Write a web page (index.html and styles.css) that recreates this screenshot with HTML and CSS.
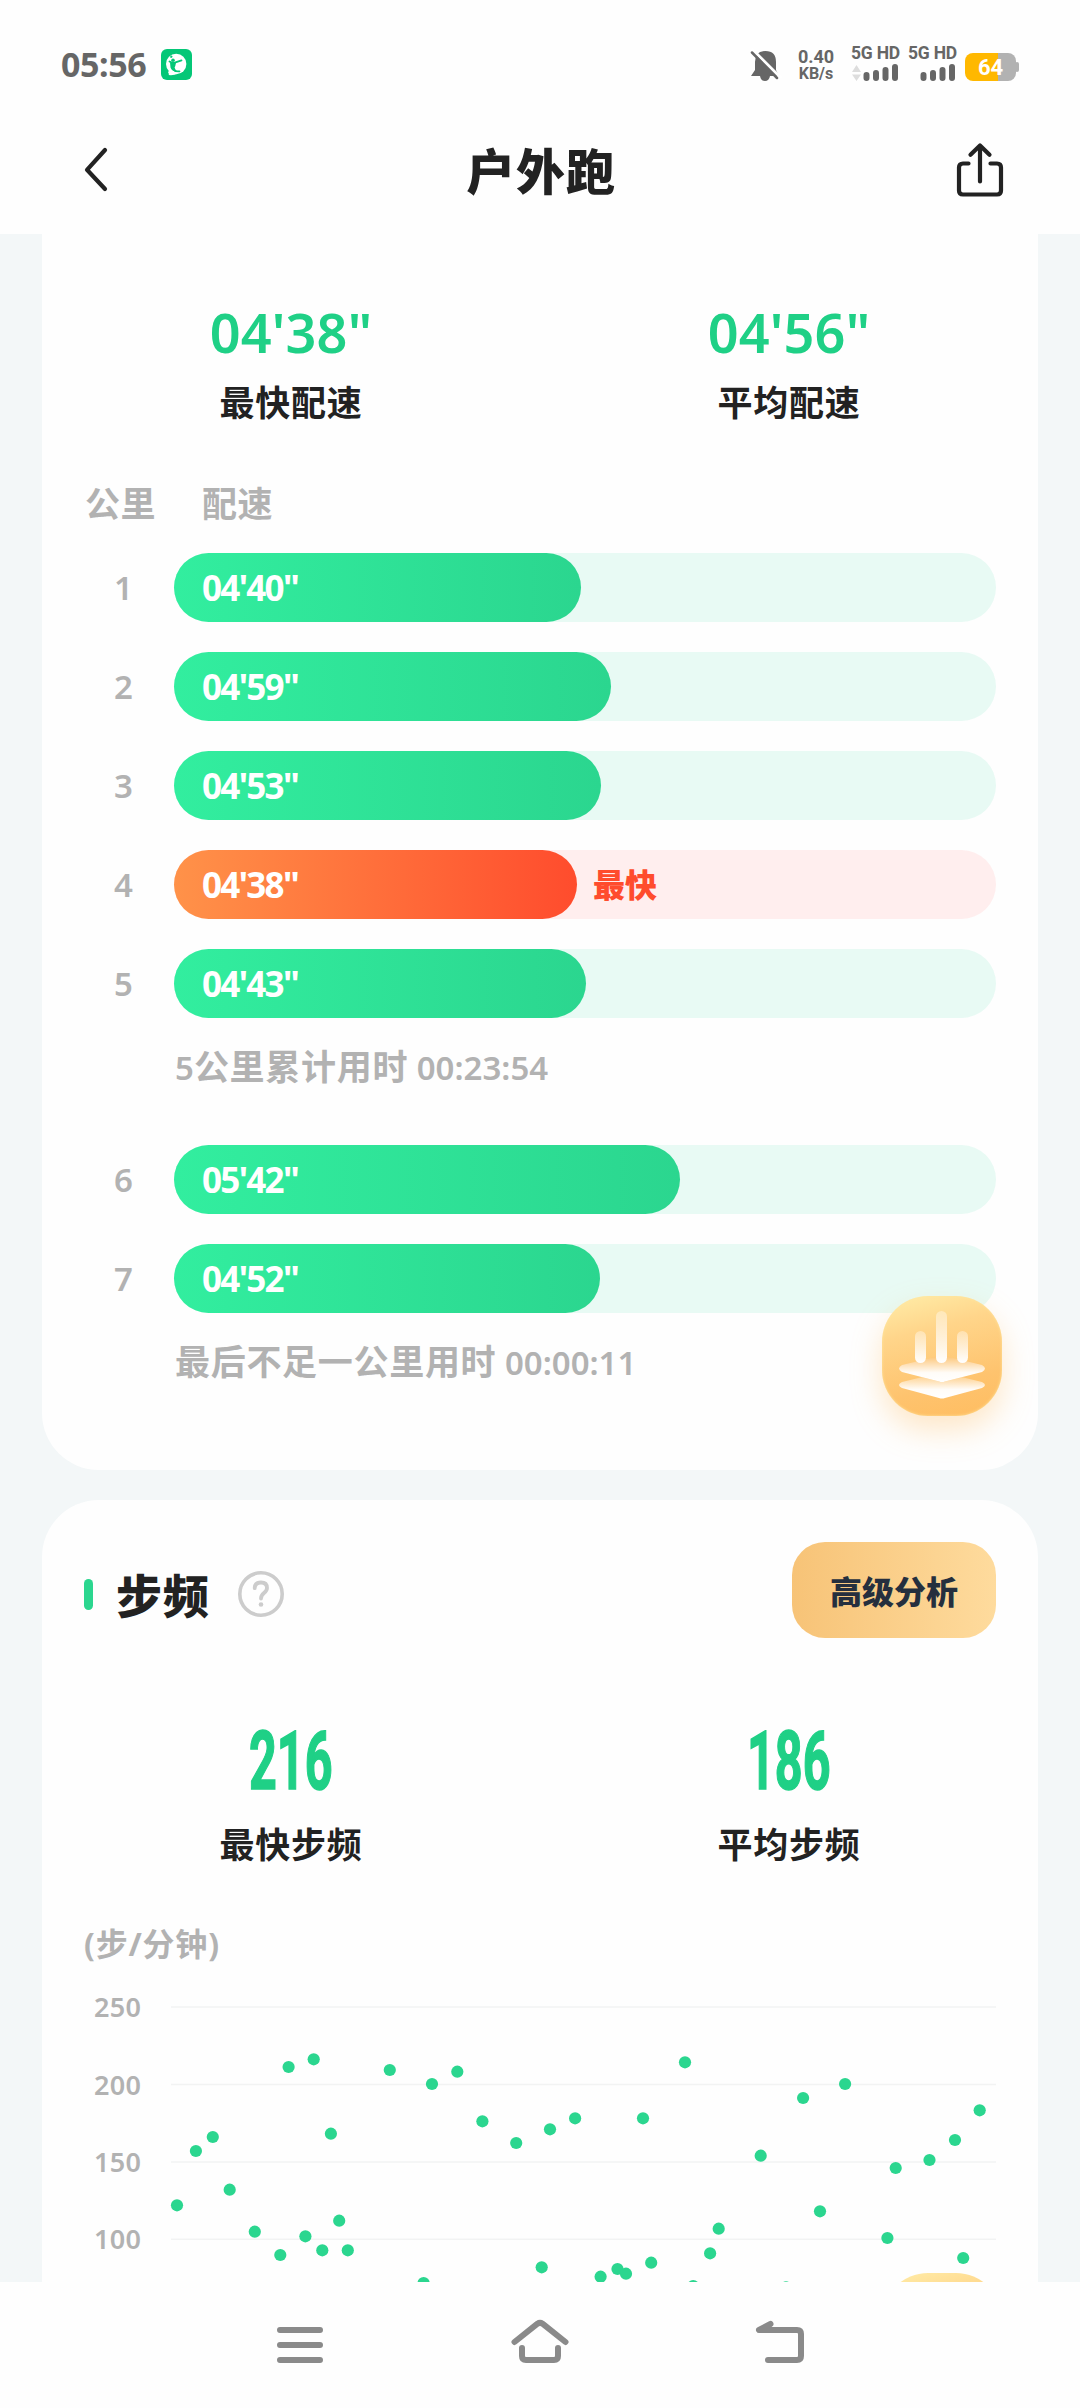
FILE: index.html
```html
<!DOCTYPE html>
<html lang="zh-CN">
<head>
<meta charset="utf-8">
<title>户外跑</title>
<link rel="stylesheet" href="styles.css">
</head>
<body>
<header class="top">
  <div class="status">
    <span class="clock">05:56</span>
    <svg class="app-icon" width="31" height="31" viewBox="0 0 31 31">
      <rect width="31" height="31" rx="6" fill="#04c777"/>
      <circle cx="15.200" cy="15" r="10.200" fill="#fff"/>
      <path d="M7 23Q8.500 25.800 7.500 26Q13 26.600 17 24.500L9 21Z" fill="#fff"/>
      <circle cx="12" cy="11.200" r="1.800" fill="#04c777"/>
      <path d="M10 8L10.600 7.500M8.500 12.500Q11.500 14.500 14.500 13.400L20.500 11.400M13.500 14.500Q9 18.500 14.500 22.200L18.500 22.300" stroke="#04c777" stroke-width="1.800" fill="none" stroke-linecap="round"/>
      <path d="M9 13.500L15 13.500Q14.500 17 13.600 18.500Q13.800 21 17 22.400Q11 23 9.500 18.500Z" fill="#04c777"/>
    </svg>
    <div class="status-right">
      <svg class="bell" width="28" height="31" viewBox="0 0 28 31">
        <path d="M4 12Q4 1 14.500 1Q25 1 25 12V20L28 26H0L4 20Z" fill="#666"/>
        <path d="M9 26H19Q18 31 14 31Q10 31 9 26Z" fill="#666"/>
        <path d="M3 1L30 28" stroke="#fff" stroke-width="3"/>
        <path d="M0 0L2 -2L5 4L2 6Z" fill="#fff"/>
        <path d="M1 2.500L26 28" stroke="#666" stroke-width="2.500" stroke-linecap="round"/>
      </svg>
      <div class="speed"><span>0.40</span><span>KB/s</span></div>
      <div class="sim"><span>5G HD</span>
        <svg width="48" height="18" viewBox="0 0 48 18">
          <path d="M1 8L5.500 1L10 8ZM1 10.500H10L5.500 17Z" fill="#ddd"/>
          <path d="M15.500 11V14M25 9V14M34.500 6V14M44 3V14" stroke="#666" stroke-width="6" stroke-linecap="round"/>
        </svg>
      </div>
      <div class="sim"><span>5G HD</span>
        <svg width="48" height="18" viewBox="0 0 48 18">
          <path d="M15.500 11V14M25 9V14M34.500 6V14M44 3V14" stroke="#666" stroke-width="6" stroke-linecap="round"/>
        </svg>
      </div>
      <div class="battery"><span>64</span></div>
    </div>
  </div>
  <div class="title-bar">
    <svg width="26" height="46" viewBox="0 0 26 46"><path d="M22 3L4 22.800L22 42" fill="none" stroke="#222" stroke-width="4.200" stroke-linecap="round" stroke-linejoin="round"/></svg>
    <h1>户外跑</h1>
    <svg width="48" height="56" viewBox="0 0 48 56"><path d="M12.500 21.500H7Q3 21.500 3 25.500V48.500Q3 52.500 7 52.500H41Q45 52.500 45 48.500V25.500Q45 21.500 41 21.500H34.500M24 39.500V3.500M14.500 12.800L24 3.500L33.500 12.800" fill="none" stroke="#222" stroke-width="4.200" stroke-linecap="round" stroke-linejoin="round"/></svg>
  </div>
</header>

<main class="content">
  <section class="card pace">
    <div class="stats">
      <div><b class="num">04'38"</b><span class="label">最快配速</span></div>
      <div><b class="num">04'56"</b><span class="label">平均配速</span></div>
    </div>
    <div class="table-head"><span>公里</span><span>配速</span></div>
    <div class="rows">
      <div class="row"><span class="km">1</span><div class="track"><div class="fill" style="width:407px">04'40"</div></div></div>
      <div class="row"><span class="km">2</span><div class="track"><div class="fill" style="width:437px">04'59"</div></div></div>
      <div class="row"><span class="km">3</span><div class="track"><div class="fill" style="width:427px">04'53"</div></div></div>
      <div class="row"><span class="km">4</span><div class="track fast"><div class="fill" style="width:403px">04'38"</div><span class="tag">最快</span></div></div>
      <div class="row"><span class="km">5</span><div class="track"><div class="fill" style="width:412px">04'43"</div></div></div>
    </div>
    <p class="note">5<i>公里累计用时</i> 00:23:54</p>
    <div class="rows second">
      <div class="row"><span class="km">6</span><div class="track"><div class="fill" style="width:506px">05'42"</div></div></div>
      <div class="row"><span class="km">7</span><div class="track"><div class="fill" style="width:426px">04'52"</div></div></div>
    </div>
    <p class="note"><i>最后不足一公里用时</i> 00:00:11</p>
  </section>

  <section class="card cadence">
    <div class="card-head">
      <span class="tick"></span>
      <h2>步频</h2>
      <svg width="46" height="46" viewBox="0 0 46 46" fill="none" stroke="#ccc"><circle cx="23" cy="23" r="21.200" stroke-width="3.600"/><path d="M16.700 17.200Q16.700 11.500 23 11.500Q29 11.500 29 17Q29 19.500 26 22Q23 24.500 23 27.500" stroke-width="3.800" stroke-linecap="round"/><circle cx="23" cy="33.500" r="2.300" fill="#ccc" stroke="none"/></svg>
      <button class="analyse">高级分析</button>
    </div>
    <div class="stats">
      <div><b class="din">216</b><span class="label">最快步频</span></div>
      <div><b class="din">186</b><span class="label">平均步频</span></div>
    </div>
    <div class="unit">(步/分钟)</div>
    <svg class="chart" width="912" height="300" viewBox="84 1982 912 300">
      <path d="M171 2007H996M171 2084.500H996M171 2162H996M171 2239.300H996" stroke="#f2f3f3" stroke-width="1.600"/>
      <g class="axis"><text x="94" y="2016.500">250</text><text x="94" y="2094.500">200</text><text x="94" y="2171.500">150</text><text x="94" y="2248.500">100</text></g>
      <g fill="#2bd68f">
        <circle cx="177" cy="2205.300" r="6.100"/><circle cx="195.900" cy="2151" r="6.100"/><circle cx="212.800" cy="2137" r="6.100"/><circle cx="229.700" cy="2189.700" r="6.100"/><circle cx="254.800" cy="2231.700" r="6.100"/><circle cx="280.300" cy="2255" r="6.100"/><circle cx="288.600" cy="2067" r="6.100"/><circle cx="305.400" cy="2236.300" r="6.100"/><circle cx="313.700" cy="2059.300" r="6.100"/><circle cx="322.300" cy="2250.300" r="6.100"/><circle cx="330.900" cy="2133.700" r="6.100"/><circle cx="339.200" cy="2220.700" r="6.100"/><circle cx="347.800" cy="2250.300" r="6.100"/><circle cx="389.800" cy="2070" r="6.100"/><circle cx="423.600" cy="2283" r="6.100"/><circle cx="432" cy="2084" r="6.100"/><circle cx="457.300" cy="2071.700" r="6.100"/><circle cx="482.400" cy="2121.300" r="6.100"/><circle cx="516.200" cy="2143" r="6.100"/><circle cx="541.700" cy="2267.300" r="6.100"/><circle cx="550" cy="2129.300" r="6.100"/><circle cx="575.100" cy="2118.300" r="6.100"/><circle cx="600.600" cy="2276.700" r="6.100"/><circle cx="617.500" cy="2269" r="6.100"/><circle cx="626" cy="2273.700" r="6.100"/><circle cx="643" cy="2118.300" r="6.100"/><circle cx="651.200" cy="2262.700" r="6.100"/><circle cx="685" cy="2062.300" r="6.100"/><circle cx="693.200" cy="2286" r="6.100"/><circle cx="710.100" cy="2253.300" r="6.100"/><circle cx="718.700" cy="2228.700" r="6.100"/><circle cx="760.700" cy="2155.700" r="6.100"/><circle cx="786" cy="2287.400" r="6.100"/><circle cx="803.100" cy="2098" r="6.100"/><circle cx="820" cy="2211.300" r="6.100"/><circle cx="845.100" cy="2084" r="6.100"/><circle cx="887.400" cy="2238" r="6.100"/><circle cx="895.700" cy="2168" r="6.100"/><circle cx="929.500" cy="2160" r="6.100"/><circle cx="955" cy="2140" r="6.100"/><circle cx="963.200" cy="2258" r="6.100"/><circle cx="979.700" cy="2110.300" r="6.100"/>
      </g>
    </svg>
  </section>

  <div class="float first">
    <svg width="120" height="120" viewBox="0 0 120 120">
      <defs>
        <linearGradient id="bar" x1="0" y1="0" x2="0" y2="1"><stop offset="0" stop-color="#fff" stop-opacity=".35"/><stop offset="1" stop-color="#fff"/></linearGradient>
        <linearGradient id="layer" x1="0" y1="0" x2="0" y2="1"><stop offset="0" stop-color="#fff" stop-opacity="0"/><stop offset=".65" stop-color="#fff" stop-opacity=".95"/><stop offset="1" stop-color="#fff"/></linearGradient>
      </defs>
      <path d="M20 86L57 77Q60 76 63 77L100 86Q106 89 100 92L63 102Q60 103 57 102L20 92Q14 89 20 86Z" fill="url(#layer)"/>
      <path d="M20 69L57 60Q60 59 63 60L100 69Q106 72.500 100 76L63 85.500Q60 86.500 57 85.500L20 76Q14 72.500 20 69Z" fill="#fdc371"/>
      <path d="M20 69L57 60Q60 59 63 60L100 69Q106 72.500 100 76L63 85.500Q60 86.500 57 85.500L20 76Q14 72.500 20 69Z" fill="url(#layer)"/>
      <rect x="33" y="35" width="11" height="32" rx="5.500" fill="url(#bar)"/>
      <rect x="54" y="15" width="11" height="52" rx="5.500" fill="url(#bar)"/>
      <rect x="75" y="35" width="11" height="32" rx="5.500" fill="url(#bar)"/>
    </svg>
  </div>
  <div class="float last"></div>
</main>

<nav class="nav">
  <svg width="80" height="60" viewBox="0 0 80 60"><path d="M20 20H60M20 35H60M20 50H60"/></svg>
  <svg width="80" height="60" viewBox="0 0 80 60"><path d="M14.500 32L37.500 13.700Q40 12 42.500 13.700L65.500 32M22 38V46Q22 50 26 50H54Q58 50 58 46V38"/></svg>
  <svg width="80" height="60" viewBox="0 0 80 60"><path d="M30.500 14L19 20H57Q61 20 61 24V46Q61 50 57 50H28"/></svg>
</nav>
</body>
</html>
```
FILE: styles.css
```css
* { box-sizing: border-box; margin: 0; padding: 0; }
body {
  width: 1080px; height: 2408px; overflow: hidden;
  display: flex; flex-direction: column;
  background: #fefefe; color: #222;
  font-family: "Noto Sans", "Noto Sans CJK SC", sans-serif;
}
svg { display: block; flex: none; overflow: visible; }
i { font-style: normal; }

.top { height: 234px; flex: none; }
.status { display: flex; height: 102px; padding: 26px 61px 0 61px; align-items: center; }
.clock { width: 100px; font-size: 34px; font-weight: 700; line-height: 40px; letter-spacing: -.400px; color: #666; margin-top: -1px; }
.status-right { display: flex; align-items: center; margin-left: auto; color: #666; font-weight: 700; font-family: Roboto, sans-serif; }
.bell { margin: 3px 17px 0 0; }
.speed { width: 40px; display: flex; flex-direction: column; align-items: center; font-size: 16px; line-height: 16px; margin: 2px 15px 0 0; }
.speed span:first-child { font-size: 18px; line-height: 18px; }
.sim { width: 57px; display: flex; flex-direction: column; height: 36px; margin-top: 2px; }
.sim span { font-size: 17.500px; line-height: 13px; height: 17px; white-space: nowrap; letter-spacing: -.200px; }
.battery { position: relative; width: 51px; height: 28px; border-radius: 8px; margin: 5px 3px 0 0; background: linear-gradient(90deg, #ffb800 33px, #b2b2b2 33px); text-align: center; }
.battery::after { content: ""; position: absolute; right: -3px; top: 9px; width: 4px; height: 10px; border-radius: 2px; background: #b2b2b2; }
.battery span { display: block; color: #fff; font-size: 22px; line-height: 29px; }

.title-bar { display: grid; grid-template-columns: 48px 1fr 48px; align-items: center; height: 132px; padding: 0 76px 0 83px; }
.title-bar svg { margin-top: 3px; }
.title-bar h1 { text-align: center; font-size: 49px; line-height: 72px; font-weight: 900; letter-spacing: .800px; padding: 5px 5px 0 0; }

.content { position: relative; height: 2048px; flex: none; overflow: hidden; background: #f3f7f8; padding: 0 42px; }
.card { background: #fefefe; padding: 0 42px; }
.pace { height: 1236px; padding-top: 59px; border-radius: 0 0 57px 57px; }
.cadence { height: 900px; margin-top: 30px; padding-top: 42px; border-radius: 57px 57px 0 0; }

.stats { display: grid; grid-template-columns: 1fr 1fr; margin: 0 -42px; }
.stats > div { display: flex; flex-direction: column; align-items: center; }
.num { height: 80px; line-height: 78px; font-size: 54px; font-weight: 600; color: #1fd086; letter-spacing: .200px; }
.label { height: 58px; line-height: 59px; font-size: 35px; font-weight: 700; letter-spacing: .700px; }
.table-head { display: flex; gap: 46px; margin-top: 33px; height: 80px; line-height: 80px; padding-left: 1px; font-size: 35px; font-weight: 700; letter-spacing: .500px; color: #b2b2b2; }
.rows { display: grid; gap: 30px; margin-top: 9px; }
.row { display: grid; grid-template-columns: 90px 1fr; height: 69px; line-height: 69px; }
.km { width: 79px; text-align: center; font-size: 33px; font-weight: 600; color: #b2b2b2; }
.track { display: flex; gap: 16px; border-radius: 34.500px; background: #e8faf4; }
.fill { padding-left: 28px; border-radius: 34.500px; background: linear-gradient(90deg, #32ee9f, #2bd68f); color: #fff; font-size: 35px; font-weight: 700; letter-spacing: -1.700px; }
.fast { background: #ffeeee; }
.fast .fill { background: linear-gradient(90deg, #ff9249, #ff4c2d); }
.tag { color: #ff4c2d; font-size: 32px; font-weight: 900; }
.note { height: 98px; line-height: 98px; padding-left: 91px; font-size: 33px; font-weight: 600; color: #b2b2b2; white-space: pre; }
.note i { font-size: 35px; font-weight: 700; letter-spacing: .700px; }
.second { margin-top: 29px; }

.card-head { display: flex; align-items: center; height: 96px; }
.tick { width: 9px; height: 31px; border-radius: 4.500px; background: #2bd68f; margin-top: 8px; }
.card-head h2 { margin: 10px 28px 0 23px; font-size: 46px; line-height: 60px; font-weight: 900; letter-spacing: 1px; }
.card-head svg { margin-top: 8px; }
.analyse { margin-left: auto; width: 204px; height: 96px; border: 0; border-radius: 33px; background: linear-gradient(90deg, #f7c377, #fedb9d); color: #252f3e; font: 900 32px "Noto Sans CJK SC", sans-serif; }
.cadence .stats { margin-top: 82px; }
.din { height: 80px; line-height: 83px; font-family: Roboto, sans-serif; font-size: 81px; font-weight: 700; color: #1fd086; transform: scaleX(.6); -webkit-text-stroke: 1.500px #1fd086; }
.cadence .label { margin-top: 15px; }
.unit { height: 60px; line-height: 60px; margin-top: 41px; font-size: 32px; font-weight: 700; color: #b2b2b2; letter-spacing: .800px; }
.chart { margin-top: 8px; }
.axis { font-size: 27px; font-weight: 600; fill: #b2b2b2; letter-spacing: .300px; }

.float { position: absolute; left: 882px; width: 120px; height: 120px; border-radius: 46px; background: linear-gradient(165deg, #ffeba6 3%, #ffd58a 30%, #fec36e 70%, #ffbd60); box-shadow: inset 0 0 3px #ffe6a0, 0 14px 30px rgba(255, 190, 100, .35); }
.first { top: 1062px; }
.last { top: 2039px; box-shadow: none; }

.nav { display: flex; height: 126px; padding: 28px 260px 0; justify-content: space-between; }
.nav path { fill: none; stroke: #8a8a8a; stroke-width: 6; stroke-linecap: round; stroke-linejoin: round; }
```
